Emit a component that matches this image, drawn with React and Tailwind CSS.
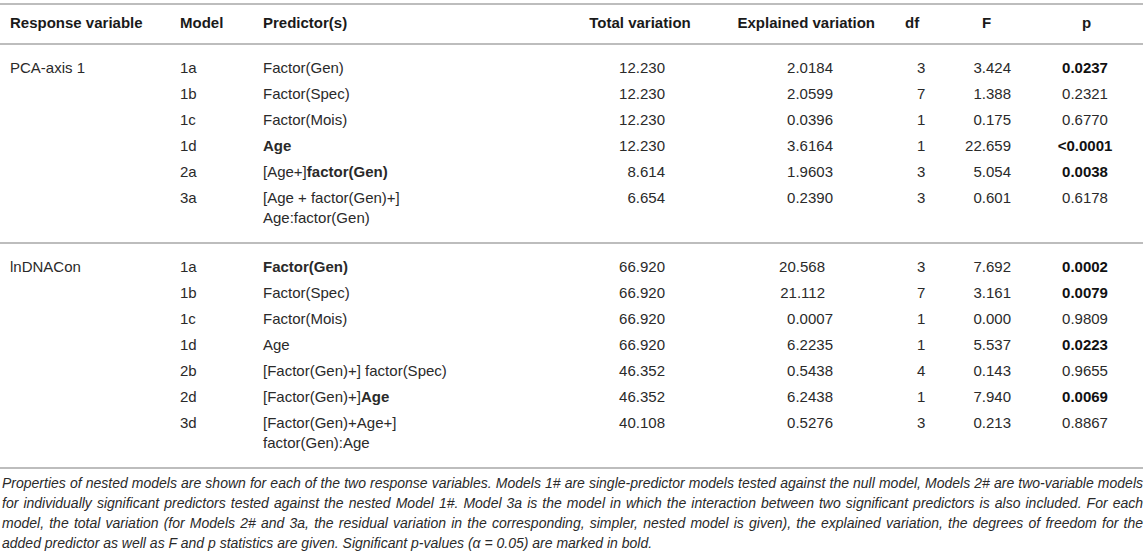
const sections = [
  {
    name: "PCA-axis 1",
    rows: [
      { m: "1a", pred: <>Factor(Gen)</>, tot: "12.230", exp: "2.0184", df: "3", f: "3.424", p: "0.0237", sig: true },
      { m: "1b", pred: <>Factor(Spec)</>, tot: "12.230", exp: "2.0599", df: "7", f: "1.388", p: "0.2321" },
      { m: "1c", pred: <>Factor(Mois)</>, tot: "12.230", exp: "0.0396", df: "1", f: "0.175", p: "0.6770" },
      { m: "1d", pred: <b>Age</b>, tot: "12.230", exp: "3.6164", df: "1", f: "22.659", p: "<0.0001", sig: true },
      { m: "2a", pred: <>[Age+]<b>factor(Gen)</b></>, tot: "8.614", exp: "1.9603", df: "3", f: "5.054", p: "0.0038", sig: true },
      { m: "3a", pred: <>[Age + factor(Gen)+]<br />Age:factor(Gen)</>, tot: "6.654", exp: "0.2390", df: "3", f: "0.601", p: "0.6178" },
    ],
  },
  {
    name: "lnDNACon",
    rows: [
      { m: "1a", pred: <b>Factor(Gen)</b>, tot: "66.920", exp: "20.568", short: true, df: "3", f: "7.692", p: "0.0002", sig: true },
      { m: "1b", pred: <>Factor(Spec)</>, tot: "66.920", exp: "21.112", short: true, df: "7", f: "3.161", p: "0.0079", sig: true },
      { m: "1c", pred: <>Factor(Mois)</>, tot: "66.920", exp: "0.0007", df: "1", f: "0.000", p: "0.9809" },
      { m: "1d", pred: <>Age</>, tot: "66.920", exp: "6.2235", df: "1", f: "5.537", p: "0.0223", sig: true },
      { m: "2b", pred: <>[Factor(Gen)+] factor(Spec)</>, tot: "46.352", exp: "0.5438", df: "4", f: "0.143", p: "0.9655" },
      { m: "2d", pred: <>[Factor(Gen)+]<b>Age</b></>, tot: "46.352", exp: "6.2438", df: "1", f: "7.940", p: "0.0069", sig: true },
      { m: "3d", pred: <>[Factor(Gen)+Age+]<br />factor(Gen):Age</>, tot: "40.108", exp: "0.5276", df: "3", f: "0.213", p: "0.8867" },
    ],
  },
];

const captionLines = [
  "Properties of nested models are shown for each of the two response variables. Models 1# are single-predictor models tested against the null model, Models 2# are two-variable models",
  "for individually significant predictors tested against the nested Model 1#. Model 3a is the model in which the interaction between two significant predictors is also included. For each",
  "model, the total variation (for Models 2# and 3a, the residual variation in the corresponding, simpler, nested model is given), the explained variation, the degrees of freedom for the",
];

export default function App() {
  return (
    <div className="w-[1145px] h-[554px] bg-white text-[#2a2a2a] font-['Liberation_Sans',Arial,sans-serif] pt-[3px] overflow-hidden">
      <table className="w-[1143px] table-fixed border-collapse text-[15px] leading-[20px]">
        <colgroup>
          <col className="w-[170px]" />
          <col className="w-[83px]" />
          <col className="w-[312px]" />
          <col className="w-[150px]" />
          <col className="w-[190px]" />
          <col className="w-[45px]" />
          <col className="w-[80px]" />
          <col className="w-[113px]" />
        </colgroup>
        <thead>
          <tr className="border-t-2 border-b-2 border-[#bdbdbd] font-bold text-[#1a1a1a]">
            <th className="pt-[8px] pb-[10px] pl-[10px] text-left">Response variable</th>
            <th className="pt-[8px] pb-[10px] pl-[10px] text-left">Model</th>
            <th className="pt-[8px] pb-[10px] pl-[10px] text-left">Predictor(s)</th>
            <th className="pt-[8px] pb-[10px] text-center">Total variation</th>
            <th className="pt-[8px] pb-[10px] pr-[30px] text-right">Explained variation</th>
            <th className="pt-[8px] pb-[10px] text-left">df</th>
            <th className="pt-[8px] pb-[10px] pl-[32px] text-left">F</th>
            <th className="pt-[8px] pb-[10px] text-center">p</th>
          </tr>
        </thead>
        {sections.map((sec) => (
          <tbody key={sec.name} className="border-b-2 border-[#bdbdbd]">
            {sec.rows.map((r, i) => {
              const first = i === 0;
              const last = i === sec.rows.length - 1;
              const pad = `${first ? "pt-[13px]" : "pt-[3px]"} ${last ? "pb-[14px]" : "pb-[3px]"} align-top`;
              return (
                <tr key={r.m}>
                  <td className={`${pad} pl-[10px]`}>{first ? sec.name : ""}</td>
                  <td className={`${pad} pl-[10px]`}>{r.m}</td>
                  <td className={`${pad} pl-[10px]`}>{r.pred}</td>
                  <td className={`${pad} pr-[50px] text-right`}>{r.tot}</td>
                  <td className={`${pad} ${r.short ? "pr-[80px]" : "pr-[72px]"} text-right`}>{r.exp}</td>
                  <td className={`${pad} pl-[12px] text-left`}>{r.df}</td>
                  <td className={`${pad} pr-[19px] text-right`}>{r.f}</td>
                  <td className={`${pad} pr-[3px] text-center ${r.sig ? "font-bold text-[#111]" : ""}`}>{r.p}</td>
                </tr>
              );
            })}
          </tbody>
        ))}
      </table>
      <div className="w-[1143px] pt-[4px] pl-[2px] italic text-[14px] leading-[20px] text-[#2a2a2a]">
        {captionLines.map((line) => (
          <div key={line} className="whitespace-nowrap text-justify [text-align-last:justify]">
            {line}
          </div>
        ))}
        <div className="whitespace-nowrap">
          added predictor as well as F and p statistics are given. Significant p-values (α = 0.05) are marked in bold.
        </div>
      </div>
    </div>
  );
}
